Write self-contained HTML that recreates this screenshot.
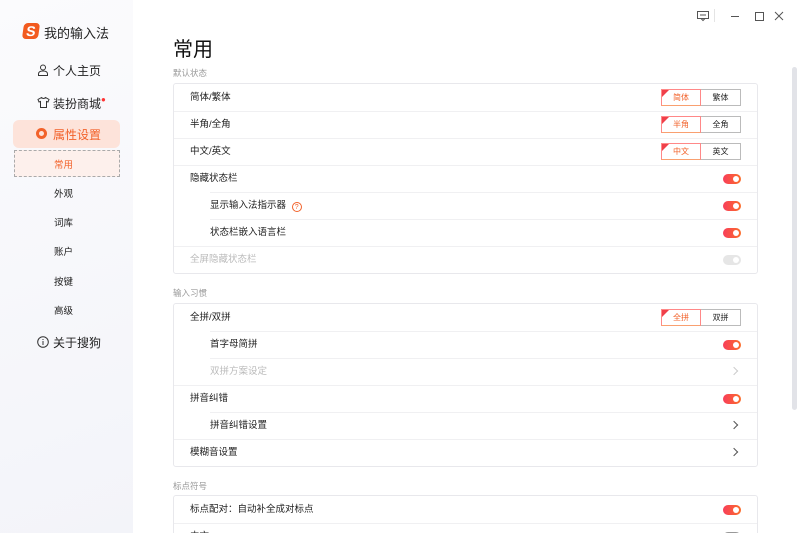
<!DOCTYPE html>
<html><head><meta charset="utf-8"><style>
*{margin:0;padding:0;box-sizing:border-box}
html,body{width:800px;height:533px;overflow:hidden}
body{font-family:"Liberation Sans","Noto Sans CJK SC",sans-serif;background:#fff;position:relative;color:#222}
.side{position:absolute;left:0;top:0;width:133px;height:533px;background:linear-gradient(160deg,#fbfbfd,#f3f4f9);}
.logo{position:absolute;left:23px;top:23px;width:16px;height:16px;background:#f25a1f;border-radius:4px;color:#fff;font-weight:bold;font-size:14px;line-height:16px;text-align:center;transform:skewX(-8deg)}
.abs{position:absolute;white-space:nowrap}
.nav{font-size:12px;color:#222}
.sel{position:absolute;left:13px;top:120px;width:107px;height:28px;background:#fde3da;border-radius:6px}
.sub{position:absolute;left:14px;top:150px;width:106px;height:27px;background:#fdf0ec;border:1px dashed #aaa}
.main h1{position:absolute;left:173px;top:33px;font-size:20px;font-weight:normal;color:#111}
.lbl{position:absolute;left:173px;font-size:8.5px;color:#999}
.card{position:absolute;left:173px;width:585px;border:1px solid #e8e8ec;border-radius:3px;background:#fff}
.row{position:relative;height:27px;font-size:9.5px;line-height:27px;padding-left:16px;color:#222}
.row.in{padding-left:36px}
.row+.row::before{content:"";position:absolute;left:0;right:0;top:0;border-top:1px solid #f0f0f2}
.row.in::before{left:36px!important}
.dis{color:#bbb}
.tg{position:absolute;right:16px;top:9px;width:18px;height:10px;border-radius:5px;background:linear-gradient(90deg,#f83e5a,#fb6d2a)}
.tg::after{content:"";position:absolute;right:2px;top:2px;width:6px;height:6px;border-radius:50%;background:#fff}
.tg.off{background:#e6e6e6}
.seg{position:absolute;right:16px;top:5px;width:80px;height:17px;display:flex;font-size:8px;line-height:15px}
.seg .a{width:40px;border:1px solid #f88;border-bottom-color:#f9a070;color:#f2622a;text-align:center;position:relative;background:#fff}
.seg .a::before{content:"";position:absolute;left:0;top:0;border-top:7px solid #f0404a;border-right:7px solid transparent}
.seg .b{width:40px;border:1px solid #bbb;border-left:none;text-align:center;color:#222}
.arr{position:absolute;right:20px;top:10px;width:6px;height:6px;border-right:1px solid #555;border-top:1px solid #555;transform:rotate(45deg)}
.arr.d{border-color:#ccc}
</style></head><body>
<div class="side">
<div class="logo">S</div>
<div class="abs" style="left:44px;top:23px;font-size:13px">我的输入法</div>
<svg class="abs" style="left:37px;top:64px" width="12" height="12" viewBox="0 0 12 12" fill="none" stroke="#333" stroke-width="1"><circle cx="6" cy="3.5" r="2.5"/><path d="M1.5 11.5v-1.5q0-3 4.5-3t4.5 3v1.5z"/></svg>
<div class="abs nav" style="left:53px;top:62px">个人主页</div>
<svg class="abs" style="left:37px;top:96px" width="13" height="12" viewBox="0 0 13 12" fill="none" stroke="#333" stroke-width="1"><path d="M4.5 1.5l-3.5 2 1 2.5 1.5-.5v6h6v-6l1.5.5 1-2.5-3.5-2q-2 2-4 0z"/></svg>
<div class="abs nav" style="left:53px;top:95px">装扮商城<span style="color:#f33;font-size:8px;vertical-align:top">●</span></div>
<div class="sel"></div>
<div class="abs" style="left:36px;top:128px;width:11px;height:11px;border-radius:50%;background:#f2622a"><div style="position:absolute;left:3px;top:3px;width:5px;height:5px;border-radius:50%;background:#fde3da"></div></div>
<div class="abs" style="left:53px;top:126px;font-size:12px;color:#f2622a">属性设置</div>
<div class="sub"></div>
<div class="abs" style="left:54px;top:157px;font-size:9.5px;color:#f2622a">常用</div>
<div class="abs nav" style="left:54px;top:186px;font-size:9.5px">外观</div>
<div class="abs nav" style="left:54px;top:215px;font-size:9.5px">词库</div>
<div class="abs nav" style="left:54px;top:244px;font-size:9.5px">账户</div>
<div class="abs nav" style="left:54px;top:274px;font-size:9.5px">按键</div>
<div class="abs nav" style="left:54px;top:303px;font-size:9.5px">高级</div>
<svg class="abs" style="left:37px;top:336px" width="12" height="12" viewBox="0 0 12 12" fill="none" stroke="#333" stroke-width="1"><circle cx="6" cy="6" r="5.3"/><path d="M6 5v4M6 3v1"/></svg>
<div class="abs nav" style="left:53px;top:334px">关于搜狗</div>
</div>
<svg class="abs" style="left:695px;top:9px" width="100" height="14" viewBox="0 0 100 14" fill="none" stroke="#555" stroke-width="1">
<rect x="2.5" y="2.5" width="11" height="7"/><path d="M6 9.5l2 2 2-2M5 6h6"/>
<line x1="19.5" y1="0" x2="19.5" y2="13" stroke="#e4e4e4"/>
<line x1="36" y1="7.5" x2="44" y2="7.5"/>
<rect x="60.5" y="3.5" width="8" height="8"/>
<path d="M80 3l8 8M88 3l-8 8"/>
</svg>
<div style="position:absolute;left:792px;top:67px;width:5px;height:343px;background:#e2e3e8;border-radius:3px"></div>
<div class="main">
<h1>常用</h1>
<div class="lbl" style="top:67px">默认状态</div>
<div class="card" style="top:83px">
<div class="row">简体/繁体<div class="seg"><div class="a">简体</div><div class="b">繁体</div></div></div>
<div class="row">半角/全角<div class="seg"><div class="a">半角</div><div class="b">全角</div></div></div>
<div class="row">中文/英文<div class="seg"><div class="a">中文</div><div class="b">英文</div></div></div>
<div class="row">隐藏状态栏<div class="tg"></div></div>
<div class="row in">显示输入法指示器 <span style="display:inline-block;width:10px;height:10px;border:1px solid #f2622a;border-radius:50%;color:#f2622a;font-size:7px;line-height:9px;text-align:center;margin-left:3px;vertical-align:-1px">?</span><div class="tg"></div></div>
<div class="row in">状态栏嵌入语言栏<div class="tg"></div></div>
<div class="row dis">全屏隐藏状态栏<div class="tg off"></div></div>
</div>
<div class="lbl" style="top:287px">输入习惯</div>
<div class="card" style="top:303px">
<div class="row">全拼/双拼<div class="seg"><div class="a">全拼</div><div class="b">双拼</div></div></div>
<div class="row in">首字母简拼<div class="tg"></div></div>
<div class="row in dis">双拼方案设定<div class="arr d"></div></div>
<div class="row">拼音纠错<div class="tg"></div></div>
<div class="row in">拼音纠错设置<div class="arr"></div></div>
<div class="row">模糊音设置<div class="arr"></div></div>
</div>
<div class="lbl" style="top:480px">标点符号</div>
<div class="card" style="top:495px">
<div class="row">标点配对：自动补全成对标点<div class="tg"></div></div>
<div class="row">中文…<div class="tg off" style="background:#fff;border:1px solid #999"></div></div>
</div>
</div>
</body></html>
